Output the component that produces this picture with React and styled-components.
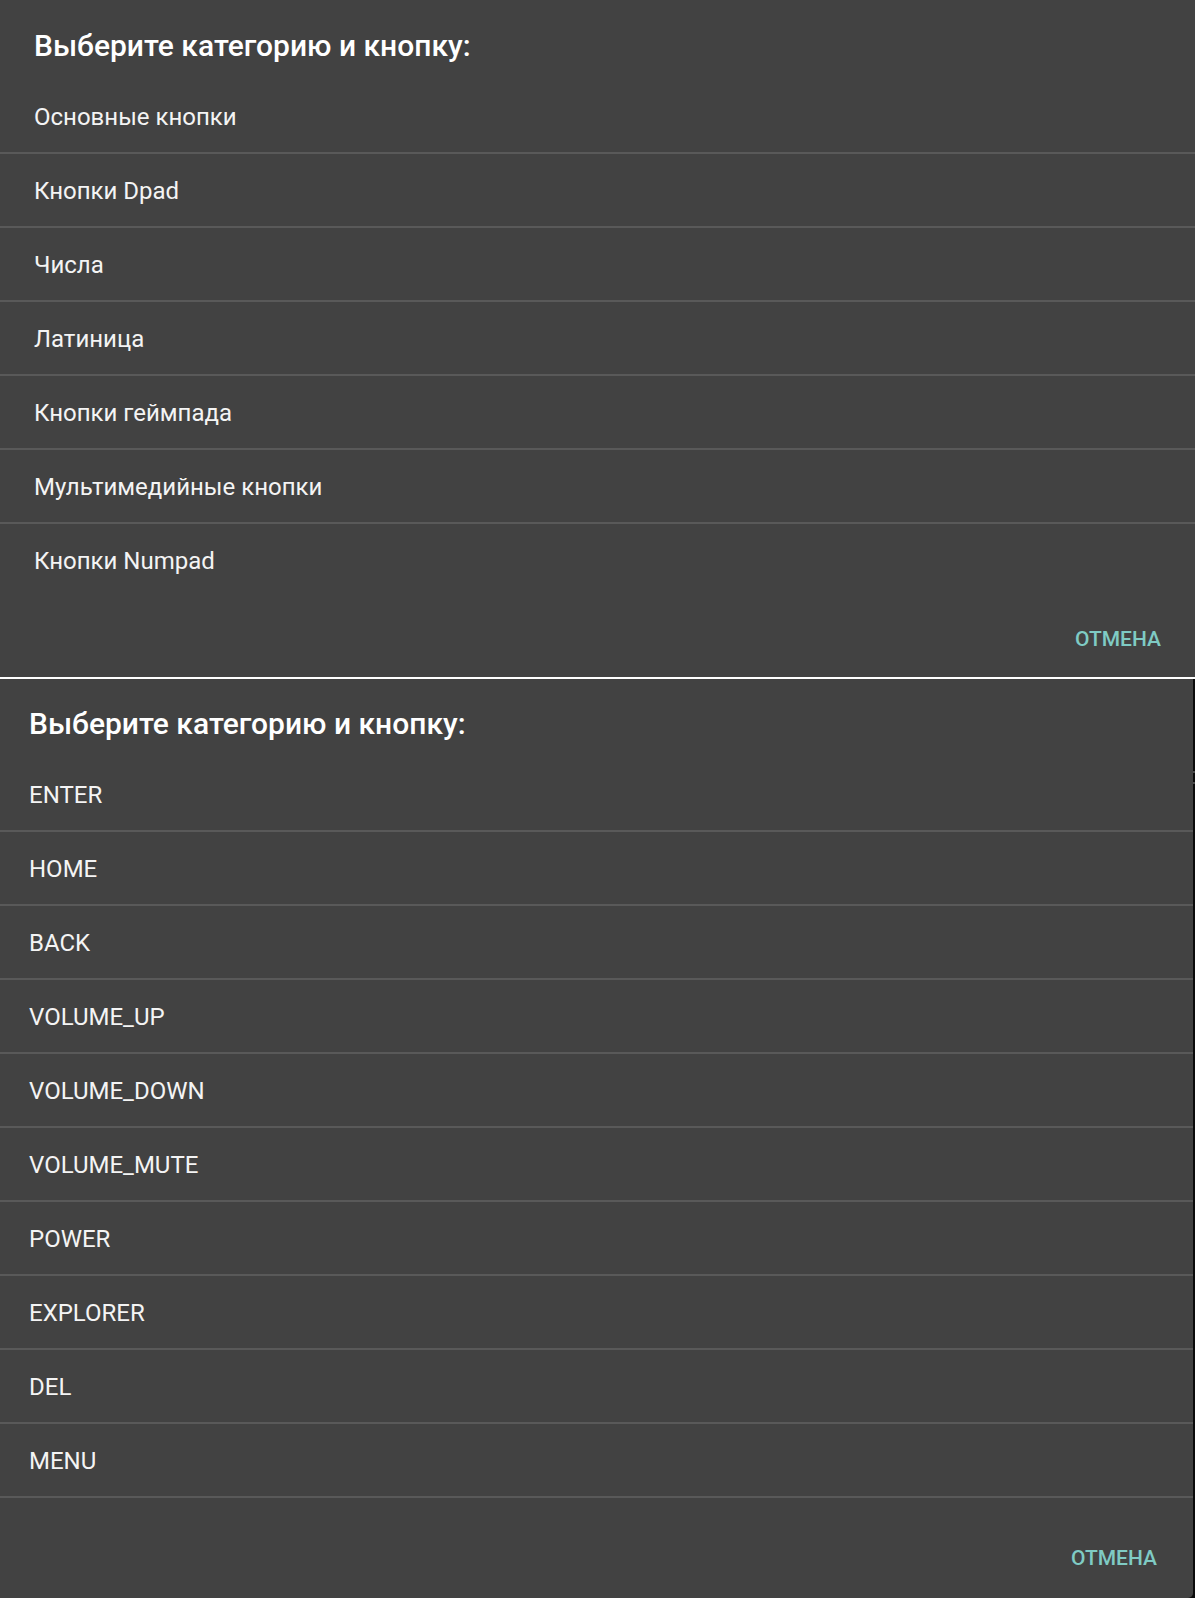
import React from "react";
import styled, { createGlobalStyle } from "styled-components";

const GlobalStyle = createGlobalStyle`
  html, body {
    margin: 0;
    padding: 0;
    background: #424242;
  }
  body {
    font-family: Roboto, "Noto Sans", "Liberation Sans", sans-serif;
    -webkit-font-smoothing: antialiased;
  }
`;

const Page = styled.div`
  width: 1195px;
  display: flex;
  flex-direction: column;
`;

const Shot = styled.div`
  display: flex;
  background: ${(props) => (props.edge ? "#0b0b0b" : "#424242")};
`;

const Dialog = styled.div`
  width: ${(props) => props.width}px;
  flex-shrink: 0;
  background: #424242;
  display: flex;
  flex-direction: column;
  border-bottom-right-radius: ${(props) => (props.rounded ? "5px" : "0")};
`;

const Title = styled.div`
  box-sizing: border-box;
  height: ${(props) => props.height}px;
  padding: ${(props) => props.top}px 0 0 ${(props) => props.inset}px;
  font-size: 30px;
  line-height: 34px;
  font-weight: 500;
  color: #ffffff;
`;

const List = styled.div`
  display: flex;
  flex-direction: column;
`;

const Row = styled.div`
  box-sizing: content-box;
  height: 70px;
  padding-top: 2px;
  display: flex;
  align-items: center;
  padding-left: ${(props) => props.inset}px;
  font-size: 24px;
  color: #f4f4f4;
  border-bottom: ${(props) => (props.divider ? "2px solid #595959" : "none")};
`;

const Footer = styled.div`
  box-sizing: border-box;
  height: ${(props) => props.height}px;
  display: flex;
  justify-content: flex-end;
  align-items: flex-start;
  padding: ${(props) => props.top}px ${(props) => props.right}px 0 0;
`;

const CancelButton = styled.div`
  font-size: 21px;
  line-height: 24px;
  font-weight: 500;
  color: #7fcbc4;
`;

const Separator = styled.div`
  height: 2px;
  background: #ffffff;
`;

const Edge = styled.div`
  flex: 1;
  display: flex;
  flex-direction: column;
  align-items: stretch;
  padding-top: 92px;
  gap: 9px;
`;

const EdgeTick = styled.div`
  height: 2px;
  background: #4a4a4a;
`;

const categories = [
  "Основные кнопки",
  "Кнопки Dpad",
  "Числа",
  "Латиница",
  "Кнопки геймпада",
  "Мультимедийные кнопки",
  "Кнопки Numpad",
];

const keys = [
  "ENTER",
  "HOME",
  "BACK",
  "VOLUME_UP",
  "VOLUME_DOWN",
  "VOLUME_MUTE",
  "POWER",
  "EXPLORER",
  "DEL",
  "MENU",
];

export default function App() {
  return (
    <>
      <GlobalStyle />
      <Page>
        <Shot>
          <Dialog width={1195}>
            <Title height={80} top={29} inset={34}>
              Выберите категорию и кнопку:
            </Title>
            <List>
              {categories.map((c, i) => (
                <Row key={c} inset={34} divider={i < categories.length - 1}>
                  {c}
                </Row>
              ))}
            </List>
            <Footer height={81} top={31} right={34}>
              <CancelButton>ОТМЕНА</CancelButton>
            </Footer>
          </Dialog>
        </Shot>
        <Separator />
        <Shot edge>
          <Dialog width={1193} rounded>
            <Title height={79} top={28} inset={29}>
              Выберите категорию и кнопку:
            </Title>
            <List>
              {keys.map((k) => (
                <Row key={k} inset={29} divider>
                  {k}
                </Row>
              ))}
            </List>
            <Footer height={100} top={48} right={36}>
              <CancelButton>ОТМЕНА</CancelButton>
            </Footer>
          </Dialog>
          <Edge>
            <EdgeTick />
            <EdgeTick />
          </Edge>
        </Shot>
      </Page>
    </>
  );
}
